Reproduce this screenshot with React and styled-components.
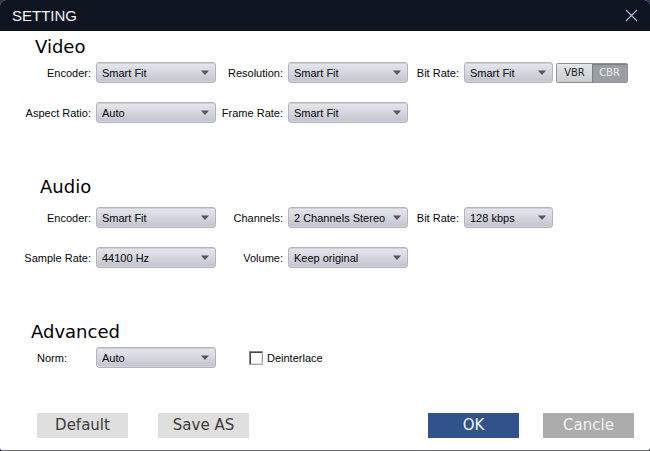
import React from 'react';
import styled, { createGlobalStyle } from 'styled-components';

const ink = '#050508';
const headerColor = '#0f1520';

const GlobalStyle = createGlobalStyle`
    * {
        box-sizing: border-box;
    }

    body {
        margin: 0;
        background-color: #26344f;
        font-family: "Liberation Sans", Arial, sans-serif;
        font-size: 11px;
        color: ${ink};
    }
`

const SWindow = styled.form`
    display: flex;
    flex-direction: column;
    min-height: 100vh;
    background-color: #fff;
    border-bottom: 1px solid #6e6e72;
    border-radius: 6px 6px 3px 3px;
    overflow: hidden;
`

const SHeader = styled.header`
    display: flex;
    align-items: center;
    justify-content: space-between;
    height: 31px;
    padding: 0 12px;
    background-color: ${headerColor};
`

const STitle = styled.h1`
    margin: 0;
    font-size: 15px;
    font-weight: normal;
    color: #f4f5f7;
`

const SClose = styled.button`
    display: flex;
    padding: 0;
    border: none;
    background: none;
    color: #a9b9dc;
    cursor: pointer;
`

const SContent = styled.main`
    display: flex;
    flex-direction: column;
    flex: 1;
    gap: 52px;
    padding-top: 4px;
`

const SSection = styled.section`
    display: flex;
    flex-direction: column;
    gap: ${({ $gap }) => $gap || 3}px;
`

const SHeading = styled.h2`
    margin: 0;
    padding-left: ${({ $indent }) => $indent}px;
    font-family: "DejaVu Sans", Verdana, sans-serif;
    font-size: 18px;
    font-weight: normal;
    line-height: 24px;
    color: #000;
`

const SFields = styled.div`
    display: grid;
    grid-template-columns: 93fr 120fr 66fr 120fr 50fr 89fr 72fr;
    gap: 19px 3px;
    align-items: center;
    padding-right: 22px;
`

const SLabel = styled.label`
    padding: ${({ $start }) => ($start ? '0 0 0 37px' : '0 2px 0 0')};
    text-align: ${({ $start }) => ($start ? 'left' : 'right')};
    white-space: nowrap;
`

const SSelectBox = styled.div`
    position: relative;

    svg {
        position: absolute;
        top: 8px;
        right: 6px;
        pointer-events: none;
    }
`

const SSelect = styled.select`
    display: block;
    width: 100%;
    height: 21px;
    padding: 0 16px 0 5px;
    appearance: none;
    border: 1px solid #b4b4bc;
    border-radius: 3px;
    background: linear-gradient(#e6e6ed, #d6d6de 50%, #c3c3ce);
    box-shadow: inset 0 1px 0 #cfcfd5, inset 0 -1px 0 #d2d2da;
    font: inherit;
    color: ${ink};
`

const SToggle = styled.div`
    display: flex;
    height: 20px;
    border: 1px solid #8d9094;
    border-radius: 2px;
`

const SToggleButton = styled.button`
    flex: 1;
    padding: 0;
    border: none;
    background: ${({ $dim }) => ($dim ? '#9b9ea3' : 'linear-gradient(#e4e7ea, #c9cdd1)')};
    box-shadow: ${({ $dim }) => ($dim ? 'inset 1px 1px 1px #7c7f84' : 'none')};
    font-family: "DejaVu Sans Condensed", "DejaVu Sans", Tahoma, sans-serif;
    font-size: 11px;
    line-height: 18px;
    color: ${({ $dim }) => ($dim ? '#eceef0' : '#1d2024')};
`

const SCheckField = styled.label`
    grid-column: 3 / 5;
    display: flex;
    align-items: center;
    gap: 4px;
    padding-left: 30px;
`

const SCheckbox = styled.input`
    width: 14px;
    height: 14px;
    margin: 0;
    appearance: none;
    border: 1px solid;
    border-color: #8a8a8a #a4abb0 #a4abb0 #8a8a8a;
    background-color: #fff;
    box-shadow: inset 1px 1px 0 #4a4644, inset -1px -1px 0 #dcdcd8;

    &:checked {
        background-color: #34548c;
    }
`

const SFooter = styled.footer`
    display: flex;
    justify-content: space-between;
    padding: 45px 16px 12px 37px;
`

const SActions = styled.div`
    display: flex;
    gap: ${({ $gap }) => $gap}px;
`

const tones = {
    plain: { background: '#dfdfdf', color: '#3c3c3c' },
    primary: { background: '#31528b', color: '#f4f6fa' },
    muted: { background: '#acacac', color: '#f2f2f2' },
};

const SButton = styled.button`
    width: 91px;
    height: 25px;
    padding: 0;
    border: none;
    background-color: ${({ $tone }) => tones[$tone].background};
    color: ${({ $tone }) => tones[$tone].color};
    font-family: "DejaVu Sans", Verdana, sans-serif;
    font-size: 15px;
    line-height: 25px;
`

const Field = ({ id, label, options, start }) => (
    <>
        <SLabel htmlFor={id} $start={start}>{label}:</SLabel>
        <SSelectBox>
            <SSelect id={id}>
                { options.map(option => <option key={option}>{option}</option>) }
            </SSelect>
            <svg width="10" height="6" viewBox="0 0 10 6" aria-hidden="true">
                <path d="M1 0.5h8L5 5z" fill="#55555f" />
            </svg>
        </SSelectBox>
    </>
);

// fills the columns left over at the end of a short row
const SRest = styled.div`
    grid-column: ${({ $from }) => $from} / -1;
`

class App extends React.Component {
    state = { rateMode: 'VBR' };

    setRateMode = (rateMode) => {
        this.setState({ rateMode });
    };

    render() {
        return (
            <>
                <GlobalStyle />
                <SWindow onSubmit={(e) => e.preventDefault()}>
                    <SHeader>
                        <STitle>SETTING</STitle>
                        <SClose type="button" aria-label="Close">
                            <svg width="13" height="13" viewBox="0 0 13 13">
                                <path d="M1 1l11 11M12 1L1 12" stroke="currentColor" strokeWidth="1.2" fill="none" />
                            </svg>
                        </SClose>
                    </SHeader>
                    <SContent>
                        <SSection>
                            <SHeading $indent={35}>Video</SHeading>
                            <SFields>
                                <Field id="video-encoder" label="Encoder" options={['Smart Fit']} />
                                <Field id="resolution" label="Resolution" options={['Smart Fit']} />
                                <Field id="video-bit-rate" label="Bit Rate" options={['Smart Fit']} />
                                <SToggle role="group" aria-label="Bit rate mode">
                                    {
                                        ['VBR', 'CBR'].map(mode => (
                                            <SToggleButton
                                                key={mode}
                                                type="button"
                                                aria-pressed={this.state.rateMode === mode}
                                                $dim={this.state.rateMode !== mode}
                                                onClick={() => this.setRateMode(mode)}
                                            >
                                                {mode}
                                            </SToggleButton>
                                        ))
                                    }
                                </SToggle>
                                <Field id="aspect-ratio" label="Aspect Ratio" options={['Auto']} />
                                <Field id="frame-rate" label="Frame Rate" options={['Smart Fit']} />
                            </SFields>
                        </SSection>
                        <SSection $gap={8}>
                            <SHeading $indent={40}>Audio</SHeading>
                            <SFields>
                                <Field id="audio-encoder" label="Encoder" options={['Smart Fit']} />
                                <Field id="channels" label="Channels" options={['2 Channels Stereo']} />
                                <Field id="audio-bit-rate" label="Bit Rate" options={['128 kbps']} />
                                <SRest $from={7} />
                                <Field id="sample-rate" label="Sample Rate" options={['44100 Hz']} />
                                <Field id="volume" label="Volume" options={['Keep original']} />
                            </SFields>
                        </SSection>
                        <SSection>
                            <SHeading $indent={31}>Advanced</SHeading>
                            <SFields>
                                <Field id="norm" label="Norm" options={['Auto']} start />
                                <SCheckField>
                                    <SCheckbox type="checkbox" />
                                    Deinterlace
                                </SCheckField>
                            </SFields>
                        </SSection>
                    </SContent>
                    <SFooter>
                        <SActions $gap={30}>
                            <SButton type="button" $tone="plain">Default</SButton>
                            <SButton type="button" $tone="plain">Save AS</SButton>
                        </SActions>
                        <SActions $gap={24}>
                            <SButton type="submit" $tone="primary">OK</SButton>
                            <SButton type="button" $tone="muted">Cancle</SButton>
                        </SActions>
                    </SFooter>
                </SWindow>
            </>
        )
    }
}

export default App;
